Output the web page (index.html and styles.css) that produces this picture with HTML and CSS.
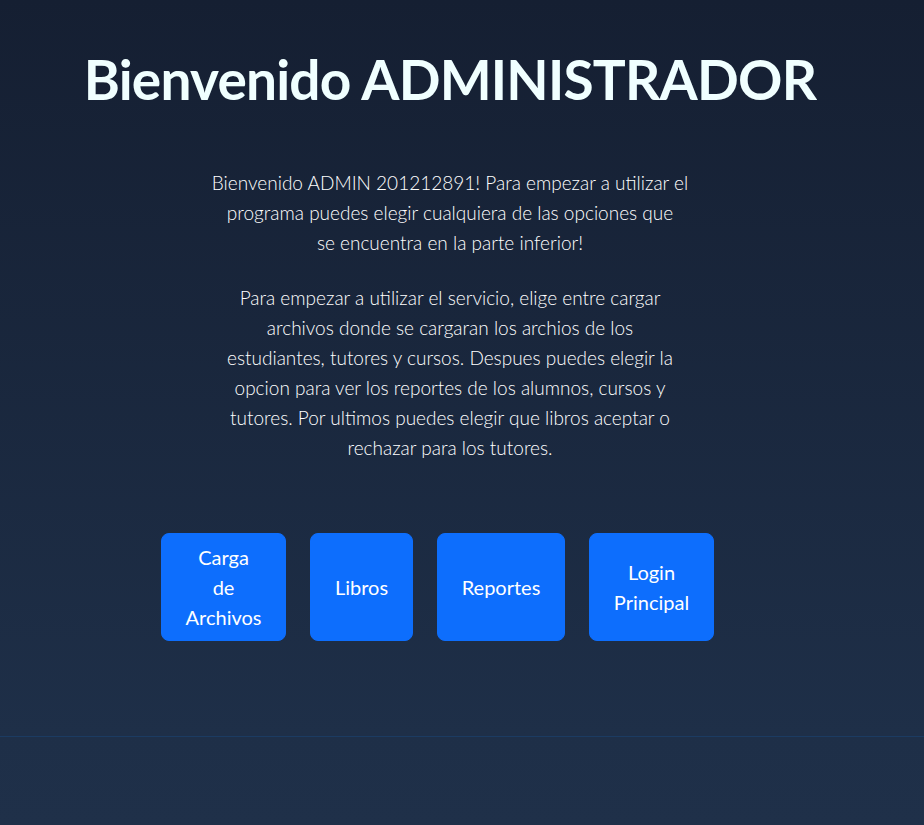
FILE: index.html
```html
<!DOCTYPE html>
<html lang="es">
<head>
<meta charset="utf-8">
<title>Bienvenido ADMINISTRADOR</title>
<link rel="stylesheet" href="styles.css">
</head>
<body>
<main class="hero">
  <div class="container">
    <h1 class="title">Bienvenido ADMINISTRADOR</h1>
    <div class="intro">
      <p class="lead">Bienvenido ADMIN 201212891! Para empezar a utilizar el<br>programa puedes elegir cualquiera de las opciones que<br>se encuentra en la parte inferior!</p>
      <p class="lead">Para empezar a utilizar el servicio, elige entre cargar<br>archivos donde se cargaran los archios de los<br>estudiantes, tutores y cursos. Despues puedes elegir la<br>opcion para ver los reportes de los alumnos, cursos y<br>tutores. Por ultimos puedes elegir que libros aceptar o<br>rechazar para los tutores.</p>
    </div>
    <div class="actions">
      <a class="btn btn-carga" href="#">Carga de Archivos</a>
      <a class="btn btn-libros" href="#">Libros</a>
      <a class="btn btn-reportes" href="#">Reportes</a>
      <a class="btn btn-login" href="#">Login Principal</a>
    </div>
  </div>
</main>
<footer class="footer"></footer>
</body>
</html>
```

FILE: styles.css
```css
html, body {
  margin: 0;
  padding: 0;
}
body {
  min-height: 825px;
  background: linear-gradient(180deg, #151f32 0%, #1e2f48 89%, #1f3049 100%);
  font-family: "Lato", "Open Sans", sans-serif;
  color: #f0ffff;
}
.hero {
  height: 737px;
  box-sizing: border-box;
  border-bottom: 1px solid #1b3b62;
  padding-top: 44px;
}
.container {
  width: 900px;
  display: flex;
  flex-direction: column;
  align-items: center;
}
.title {
  margin: 0;
  padding-top: 2px;
  font-size: 55px;
  line-height: 66px;
  letter-spacing: -0.8px;
  font-weight: 700;
  color: #f0ffff;
  text-align: center;
}
.intro {
  margin-top: 56px;
  width: 500px;
}
.lead {
  margin: 0 0 25px;
  font-size: 19px;
  line-height: 30px;
  font-weight: 300;
  text-align: center;
  color: #ffffff;
}
.actions {
  margin-top: 45px;
  margin-right: 25px;
  display: flex;
  gap: 24px;
}
.btn {
  box-sizing: border-box;
  height: 108px;
  display: flex;
  align-items: center;
  justify-content: center;
  text-align: center;
  padding: 0 24px;
  background: #0d6efd;
  border: 1px solid #0d6efd;
  border-radius: 8px;
  color: #fff;
  font-size: 20px;
  line-height: 30px;
  text-decoration: none;
}
.btn-carga { width: 125px; }
.btn-libros { width: 103px; }
.btn-reportes { width: 128px; }
.btn-login { width: 125px; }
.footer {
  height: 88px;
}
```
